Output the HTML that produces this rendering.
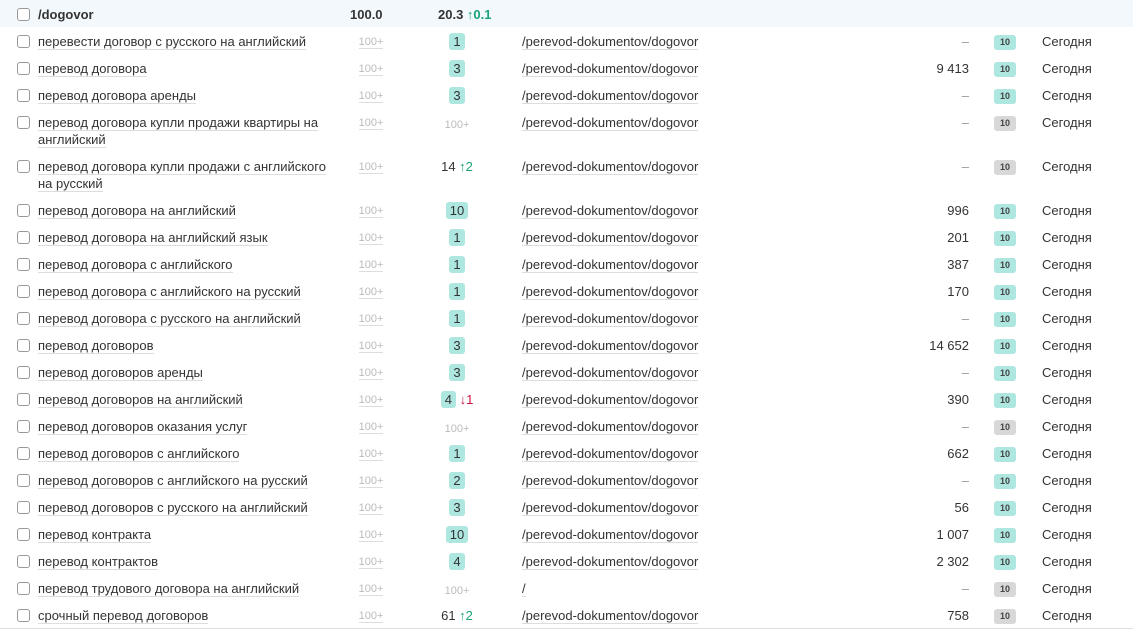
<!DOCTYPE html>
<html><head><meta charset="utf-8"><style>
body{margin:0;width:1133px;height:630px;overflow:hidden;background:#fff;font-family:"Liberation Sans","DejaVu Sans",sans-serif;font-size:13px;color:#333}
.row{position:relative;height:27px}
.row.two{height:44px}
.row>div{position:absolute;top:6px;line-height:17px}
.cb{left:17px;top:8px!important;width:11px;height:11px;border:1px solid #999;border-radius:3px;background:#fff}
.kw{left:38px;width:300px}
.kw span,.url span,.pl span{border-bottom:1px solid #ddd}
.row>.pl{left:340px;width:62px;text-align:center;color:#bbb;font-size:11px;top:7px}
.pos{left:400px;width:114px;text-align:center}
.b{display:inline-block;background:#aee6e0;border-radius:3px;padding:0 4px;line-height:17px}
.g{color:#bbb;font-size:11px;position:relative;top:1px}
.up{color:#1aa37a}
.dn{color:#d01040}
.url{left:522px}
.vol{left:880px;width:89px;text-align:right}
.vol.d{color:#999}
.ten{left:994px;width:22px;height:15px;top:8px!important;border-radius:3px;background:#aee6e0;font-size:9px;text-align:center;line-height:15px!important;font-weight:bold;color:#444}
.ten.gr{background:#d8d8d8}
.dt{left:1042px}
.hdr{background:#f3f8fc;height:27px}
.hdr div{font-weight:bold}
</style></head><body>
<div class="row hdr"><div class="cb" style="font-weight:normal"></div><div class="kw">/dogovor</div><div style="left:350px">100.0</div><div style="left:438px">20.3 <span class="up">↑0.1</span></div></div>

<div class="row"><div class="cb"></div><div class="kw"><span>перевести договор с русского на английский</span></div><div class="pl"><span>100+</span></div><div class="pos"><span class="b">1</span></div><div class="url"><span>/perevod-dokumentov/dogovor</span></div><div class="vol d">–</div><div class="ten">10</div><div class="dt">Сегодня</div></div>
<div class="row"><div class="cb"></div><div class="kw"><span>перевод договора</span></div><div class="pl"><span>100+</span></div><div class="pos"><span class="b">3</span></div><div class="url"><span>/perevod-dokumentov/dogovor</span></div><div class="vol">9 413</div><div class="ten">10</div><div class="dt">Сегодня</div></div>
<div class="row"><div class="cb"></div><div class="kw"><span>перевод договора аренды</span></div><div class="pl"><span>100+</span></div><div class="pos"><span class="b">3</span></div><div class="url"><span>/perevod-dokumentov/dogovor</span></div><div class="vol d">–</div><div class="ten">10</div><div class="dt">Сегодня</div></div>
<div class="row two"><div class="cb"></div><div class="kw"><span>перевод договора купли продажи квартиры на</span><br><span>английский</span></div><div class="pl"><span>100+</span></div><div class="pos"><span class="g">100+</span></div><div class="url"><span>/perevod-dokumentov/dogovor</span></div><div class="vol d">–</div><div class="ten gr">10</div><div class="dt">Сегодня</div></div>
<div class="row two"><div class="cb"></div><div class="kw"><span>перевод договора купли продажи с английского</span><br><span>на русский</span></div><div class="pl"><span>100+</span></div><div class="pos">14 <span class="up">↑2</span></div><div class="url"><span>/perevod-dokumentov/dogovor</span></div><div class="vol d">–</div><div class="ten gr">10</div><div class="dt">Сегодня</div></div>
<div class="row"><div class="cb"></div><div class="kw"><span>перевод договора на английский</span></div><div class="pl"><span>100+</span></div><div class="pos"><span class="b">10</span></div><div class="url"><span>/perevod-dokumentov/dogovor</span></div><div class="vol">996</div><div class="ten">10</div><div class="dt">Сегодня</div></div>
<div class="row"><div class="cb"></div><div class="kw"><span>перевод договора на английский язык</span></div><div class="pl"><span>100+</span></div><div class="pos"><span class="b">1</span></div><div class="url"><span>/perevod-dokumentov/dogovor</span></div><div class="vol">201</div><div class="ten">10</div><div class="dt">Сегодня</div></div>
<div class="row"><div class="cb"></div><div class="kw"><span>перевод договора с английского</span></div><div class="pl"><span>100+</span></div><div class="pos"><span class="b">1</span></div><div class="url"><span>/perevod-dokumentov/dogovor</span></div><div class="vol">387</div><div class="ten">10</div><div class="dt">Сегодня</div></div>
<div class="row"><div class="cb"></div><div class="kw"><span>перевод договора с английского на русский</span></div><div class="pl"><span>100+</span></div><div class="pos"><span class="b">1</span></div><div class="url"><span>/perevod-dokumentov/dogovor</span></div><div class="vol">170</div><div class="ten">10</div><div class="dt">Сегодня</div></div>
<div class="row"><div class="cb"></div><div class="kw"><span>перевод договора с русского на английский</span></div><div class="pl"><span>100+</span></div><div class="pos"><span class="b">1</span></div><div class="url"><span>/perevod-dokumentov/dogovor</span></div><div class="vol d">–</div><div class="ten">10</div><div class="dt">Сегодня</div></div>
<div class="row"><div class="cb"></div><div class="kw"><span>перевод договоров</span></div><div class="pl"><span>100+</span></div><div class="pos"><span class="b">3</span></div><div class="url"><span>/perevod-dokumentov/dogovor</span></div><div class="vol">14 652</div><div class="ten">10</div><div class="dt">Сегодня</div></div>
<div class="row"><div class="cb"></div><div class="kw"><span>перевод договоров аренды</span></div><div class="pl"><span>100+</span></div><div class="pos"><span class="b">3</span></div><div class="url"><span>/perevod-dokumentov/dogovor</span></div><div class="vol d">–</div><div class="ten">10</div><div class="dt">Сегодня</div></div>
<div class="row"><div class="cb"></div><div class="kw"><span>перевод договоров на английский</span></div><div class="pl"><span>100+</span></div><div class="pos"><span class="b">4</span> <span class="dn">↓1</span></div><div class="url"><span>/perevod-dokumentov/dogovor</span></div><div class="vol">390</div><div class="ten">10</div><div class="dt">Сегодня</div></div>
<div class="row"><div class="cb"></div><div class="kw"><span>перевод договоров оказания услуг</span></div><div class="pl"><span>100+</span></div><div class="pos"><span class="g">100+</span></div><div class="url"><span>/perevod-dokumentov/dogovor</span></div><div class="vol d">–</div><div class="ten gr">10</div><div class="dt">Сегодня</div></div>
<div class="row"><div class="cb"></div><div class="kw"><span>перевод договоров с английского</span></div><div class="pl"><span>100+</span></div><div class="pos"><span class="b">1</span></div><div class="url"><span>/perevod-dokumentov/dogovor</span></div><div class="vol">662</div><div class="ten">10</div><div class="dt">Сегодня</div></div>
<div class="row"><div class="cb"></div><div class="kw"><span>перевод договоров с английского на русский</span></div><div class="pl"><span>100+</span></div><div class="pos"><span class="b">2</span></div><div class="url"><span>/perevod-dokumentov/dogovor</span></div><div class="vol d">–</div><div class="ten">10</div><div class="dt">Сегодня</div></div>
<div class="row"><div class="cb"></div><div class="kw"><span>перевод договоров с русского на английский</span></div><div class="pl"><span>100+</span></div><div class="pos"><span class="b">3</span></div><div class="url"><span>/perevod-dokumentov/dogovor</span></div><div class="vol">56</div><div class="ten">10</div><div class="dt">Сегодня</div></div>
<div class="row"><div class="cb"></div><div class="kw"><span>перевод контракта</span></div><div class="pl"><span>100+</span></div><div class="pos"><span class="b">10</span></div><div class="url"><span>/perevod-dokumentov/dogovor</span></div><div class="vol">1 007</div><div class="ten">10</div><div class="dt">Сегодня</div></div>
<div class="row"><div class="cb"></div><div class="kw"><span>перевод контрактов</span></div><div class="pl"><span>100+</span></div><div class="pos"><span class="b">4</span></div><div class="url"><span>/perevod-dokumentov/dogovor</span></div><div class="vol">2 302</div><div class="ten">10</div><div class="dt">Сегодня</div></div>
<div class="row"><div class="cb"></div><div class="kw"><span>перевод трудового договора на английский</span></div><div class="pl"><span>100+</span></div><div class="pos"><span class="g">100+</span></div><div class="url"><span>/</span></div><div class="vol d">–</div><div class="ten gr">10</div><div class="dt">Сегодня</div></div>
<div class="row" style="border-bottom:1px solid #ddd"><div class="cb"></div><div class="kw"><span>срочный перевод договоров</span></div><div class="pl"><span>100+</span></div><div class="pos">61 <span class="up">↑2</span></div><div class="url"><span>/perevod-dokumentov/dogovor</span></div><div class="vol">758</div><div class="ten gr">10</div><div class="dt">Сегодня</div></div>
</body></html>
